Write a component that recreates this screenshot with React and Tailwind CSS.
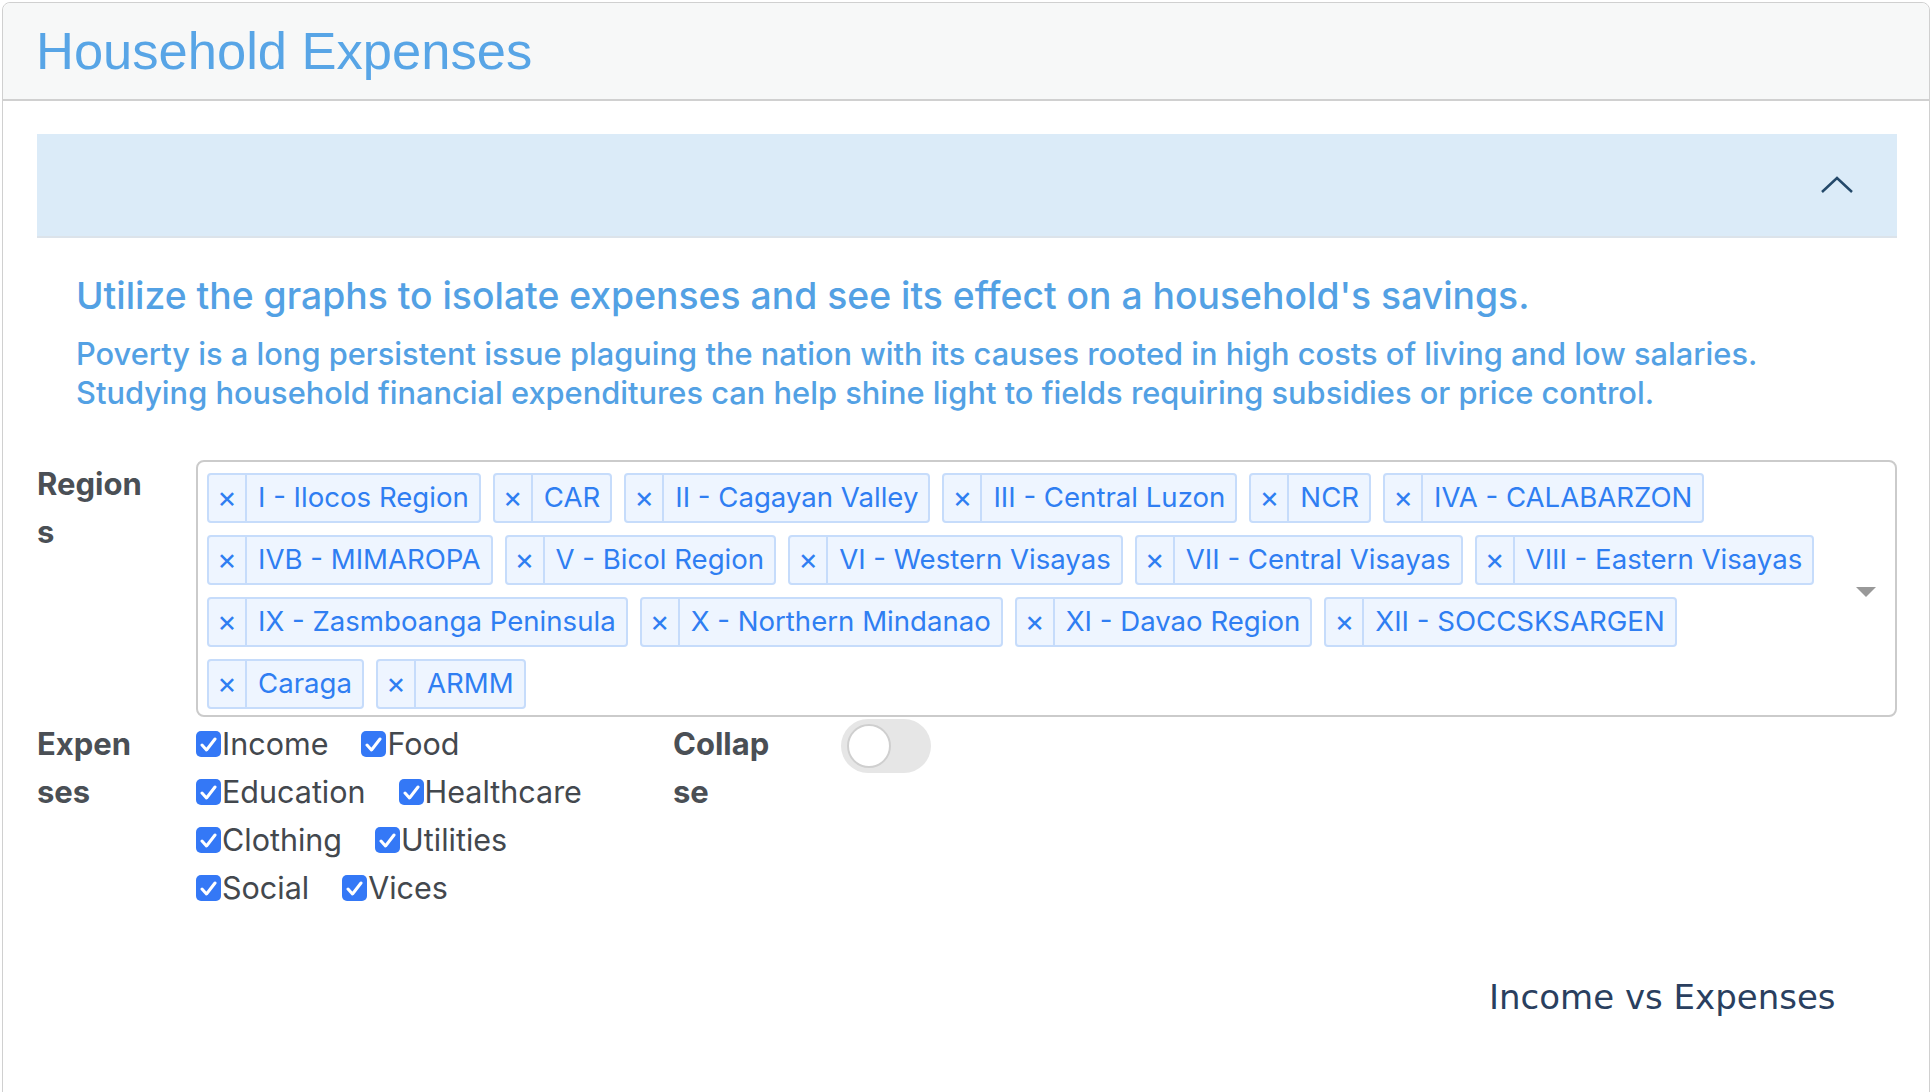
import React from 'react';

const rows = [
  ['I - Ilocos Region', 'CAR', 'II - Cagayan Valley', 'III - Central Luzon', 'NCR', 'IVA - CALABARZON'],
  ['IVB - MIMAROPA', 'V - Bicol Region', 'VI - Western Visayas', 'VII - Central Visayas', 'VIII - Eastern Visayas'],
  ['IX - Zasmboanga Peninsula', 'X - Northern Mindanao', 'XI - Davao Region', 'XII - SOCCSKSARGEN'],
  ['Caraga', 'ARMM'],
];

const expenses = [
  ['Income', 'Food'],
  ['Education', 'Healthcare'],
  ['Clothing', 'Utilities'],
  ['Social', 'Vices'],
];

const Tag = ({ label }) => (
  <div className="flex h-[50px] items-stretch rounded-[4px] border-2 border-[#c6dcfb] bg-[#eef5ff] text-[#2f7ef2]">
    <span className="flex w-[38px] items-center justify-center border-r-2 border-[#c6dcfb] pb-[3px] text-[30px] leading-none">×</span>
    <span className="flex items-center pl-[11px] pr-[10px] text-[27.6px] whitespace-nowrap">{label}</span>
  </div>
);

const Check = ({ label }) => (
  <label className="flex h-[48px] items-center">
    <span className="mr-[1px] flex h-[26px] w-[25px] items-center justify-center rounded-[5px] bg-[#3478f6]">
      <svg width="17" height="15" viewBox="0 0 17 15">
        <polyline points="2,8 6.5,13 15,2" fill="none" stroke="white" strokeWidth="3" strokeLinecap="round" strokeLinejoin="round" />
      </svg>
    </span>
    <span className="text-[30.5px] text-[#43484e]">{label}</span>
  </label>
);

const App = () => {
  return (
    <div className="min-h-screen bg-white px-[2px] pt-[2px]" style={{ fontFamily: 'Inter, "Noto Sans", sans-serif' }}>
      <div className="min-h-[1200px] rounded-t-[8px] border border-[#d0d0d0] bg-white">
        <div className="flex h-[98px] items-center rounded-t-[8px] border-b-2 border-[#d0d0d0] bg-[#f7f8f8] px-[33px]">
          <h1 className="text-[52.5px] leading-none text-[#58a5e6]" style={{ fontFamily: '"Liberation Sans", Arial, sans-serif' }}>
            Household Expenses
          </h1>
        </div>

        <div className="pl-[34px] pr-[32px]">
          <div className="mt-[33px] flex h-[104px] items-center justify-end border-b-2 border-[#dce3ea] bg-[#dbebf8] pr-[43px]">
            <svg width="34" height="18" viewBox="0 0 34 18">
              <polyline points="2,16 17,2 32,16" fill="none" stroke="#24496a" strokeWidth="2.5" />
            </svg>
          </div>

          <div className="pl-[39px]">
            <h3 className="mt-[36px] text-[37.3px] font-medium leading-[43px] text-[#53a1e4]">
              Utilize the graphs to isolate expenses and see its effect on a household's savings.
            </h3>
            <p className="mt-[17px] text-[30.8px] font-medium leading-[39px] text-[#53a1e4]">
              Poverty is a long persistent issue plaguing the nation with its causes rooted in high costs of living and low salaries.
              <br />
              Studying household financial expenditures can help shine light to fields requiring subsidies or price control.
            </p>
          </div>

          <div className="mt-[48px] flex">
            <div className="w-[159px] text-[31px] font-bold leading-[48px] text-[#4a4f55]">
              Region
              <br />s
            </div>
            <div className="relative flex flex-1 flex-col gap-[12px] rounded-[8px] border-2 border-[#cbcbcb] pb-[6px] pl-[9px] pt-[11px]">
              {rows.map((row, i) => (
                <div key={i} className="flex gap-[12px]">
                  {row.map((r) => (
                    <Tag key={r} label={r} />
                  ))}
                </div>
              ))}
              <svg className="absolute right-[19px] top-[125px]" width="20" height="10" viewBox="0 0 20 10">
                <polygon points="0,0 20,0 10,10" fill="#999999" />
              </svg>
            </div>
          </div>

          <div className="flex">
            <div className="mt-[3px] w-[159px] text-[31px] font-bold leading-[48px] text-[#4a4f55]">
              Expen
              <br />
              ses
            </div>
            <div className="mt-[3px] w-[477px]">
              {expenses.map((pair, i) => (
                <div key={i} className="flex gap-[33px]">
                  {pair.map((e) => (
                    <Check key={e} label={e} />
                  ))}
                </div>
              ))}
            </div>
            <div className="mt-[3px] w-[168px] text-[31px] font-bold leading-[48px] text-[#4a4f55]">
              Collap
              <br />
              se
            </div>
            <div className="mt-[2px] flex h-[54px] w-[90px] items-center rounded-full bg-[#e6e6e6] px-[6px]">
              <div className="h-[44px] w-[44px] rounded-full border-2 border-[#cfcfcf] bg-white" />
            </div>
          </div>

          <div
            className="ml-[1452px] mt-[68px] text-[34px] leading-none text-[#2a3f5f] whitespace-nowrap"
            style={{ fontFamily: '"DejaVu Sans", Verdana, sans-serif' }}
          >
            Income vs Expenses
          </div>
        </div>
      </div>
    </div>
  );
};

export default App;
